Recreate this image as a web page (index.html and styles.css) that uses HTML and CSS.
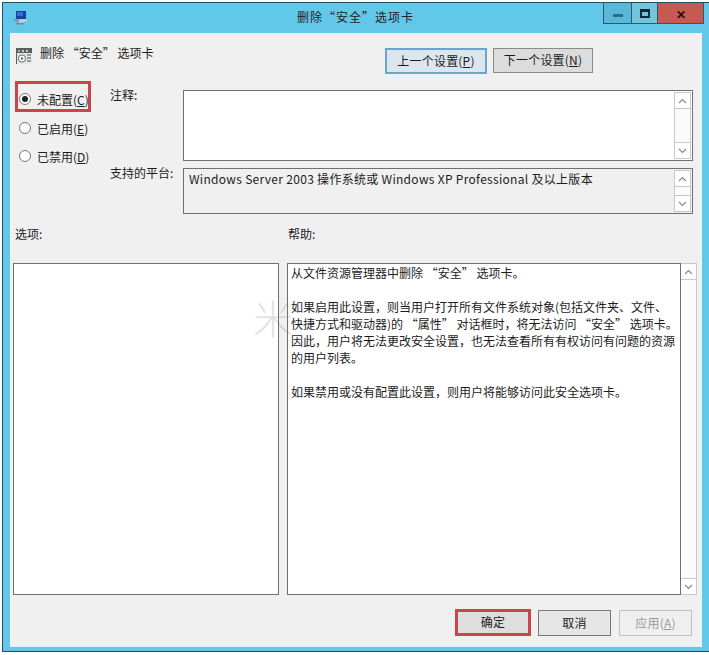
FILE: index.html
```html
<!DOCTYPE html>
<html lang="zh-CN">
<head>
  <meta charset="utf-8">
  <title>删除“安全”选项卡</title>
  <link rel="stylesheet" href="styles.css">
</head>
<body>
  <svg class="defs" width="0" height="0">
    <symbol id="chev-up" viewBox="0 0 9 6"><polyline points="1,5 4.5,1.5 8,5" fill="none" stroke="#8a8a8a" stroke-width="1.2"/></symbol>
    <symbol id="chev-down" viewBox="0 0 9 6"><polyline points="1,1 4.5,4.5 8,1" fill="none" stroke="#8a8a8a" stroke-width="1.2"/></symbol>
  </svg>

  <div class="window">
    <!-- Title bar -->
    <div class="titlebar">
      <svg class="app-icon" width="15" height="14" viewBox="0 0 15 14">
        <rect x="3" y="0" width="10" height="8" fill="#1c3f9e"/>
        <rect x="4" y="1" width="6" height="4" fill="#2f6fe0"/>
        <path d="M1 7 L6 9 L6 12 L1 10 Z" fill="#8a97a8"/>
        <path d="M6 9 L13 8 L14 10 L6 12 Z" fill="#c9d2dc"/>
        <rect x="3" y="12" width="8" height="1.5" fill="#7d8894"/>
      </svg>
      <div class="title">删除“安全”选项卡</div>
      <div class="caption-btns">
        <div class="cap cap-min"><span class="min-glyph"></span></div>
        <div class="cap cap-max"><span class="max-glyph"></span></div>
        <div class="cap cap-close">✕</div>
      </div>
    </div>

    <div class="client">
      <!-- Header -->
      <div class="head-row">
        <div class="policy">
          <svg width="16" height="16" viewBox="0 0 16 16">
            <rect width="16" height="16" fill="#e6e6e2"/>
            <rect width="16" height="5" fill="#5a5f5c"/>
            <rect x="2" y="2" width="2" height="2" fill="#8fc98f"/>
            <rect x="6" y="2" width="2" height="2" fill="#c8d0c0"/>
            <rect x="10" y="2" width="2" height="2" fill="#c8d0c0"/>
            <circle cx="6" cy="10.5" r="3.6" fill="#fff" stroke="#5d6b72"/>
            <circle cx="6" cy="10.5" r="1.2" fill="#5d6b72"/>
            <path d="M11 7h4M11 10h4M11 13h4" stroke="#4d5a50"/>
            <rect y="5" width="1" height="11" fill="#5a5f5c"/>
          </svg>
          <span>删除 “安全” 选项卡</span>
        </div>
        <button class="btn btn-prev">上一个设置(<u>P</u>)</button>
        <button class="btn btn-next">下一个设置(<u>N</u>)</button>
      </div>

      <!-- State and fields -->
      <div class="settings">
        <div class="state">
          <label class="radio radio-marked"><span class="dot dot-on"></span><span>未配置(<u>C</u>)</span></label>
          <label class="radio"><span class="dot"></span><span>已启用(<u>E</u>)</span></label>
          <label class="radio"><span class="dot"></span><span>已禁用(<u>D</u>)</span></label>
        </div>
        <div class="fields">
          <div class="field">
            <div class="field-label">注释:</div>
            <div class="box box-note">
              <div class="scroll">
                <div class="arrow"><svg width="9" height="6"><use href="#chev-up"/></svg></div>
                <div class="track"></div>
                <div class="arrow"><svg width="9" height="6"><use href="#chev-down"/></svg></div>
              </div>
            </div>
          </div>
          <div class="field">
            <div class="field-label">支持的平台:</div>
            <div class="box box-platform">
              <div class="platform-text">Windows Server 2003 操作系统或 Windows XP Professional 及以上版本</div>
              <div class="scroll">
                <div class="arrow"><svg width="9" height="6"><use href="#chev-up"/></svg></div>
                <div class="track"></div>
                <div class="arrow"><svg width="9" height="6"><use href="#chev-down"/></svg></div>
              </div>
            </div>
          </div>
        </div>
      </div>

      <!-- Options and help -->
      <div class="section-labels">
        <div class="label-options">选项:</div>
        <div>帮助:</div>
      </div>
      <div class="panes">
        <div class="pane-options"></div>
        <div class="pane-help">
          从文件资源管理器中删除 “安全” 选项卡。<br>
          <br>
          如果启用此设置，则当用户打开所有文件系统对象(包括文件夹、文件、<br>
          快捷方式和驱动器)的 “属性” 对话框时，将无法访问 “安全” 选项卡。<br>
          因此，用户将无法更改安全设置，也无法查看所有有权访问有问题的资源<br>
          的用户列表。<br>
          <br>
          如果禁用或没有配置此设置，则用户将能够访问此安全选项卡。
        </div>
        <div class="scroll scroll-help">
          <div class="arrow"><svg width="9" height="6"><use href="#chev-up"/></svg></div>
          <div class="track"></div>
          <div class="arrow"><svg width="9" height="6"><use href="#chev-down"/></svg></div>
        </div>
      </div>

      <!-- Footer buttons -->
      <div class="footer">
        <button class="btn btn-ok">确定</button>
        <button class="btn btn-cancel">取消</button>
        <button class="btn btn-apply">应用(<u>A</u>)</button>
      </div>

      <div class="watermark">米</div>
    </div>
  </div>
</body>
</html>
```

FILE: styles.css
```css
* {
  margin: 0;
  padding: 0;
  box-sizing: border-box;
}

html, body {
  width: 709px;
  height: 655px;
  overflow: hidden;
  background: #fff;
}

body {
  font-family: "Noto Sans CJK SC", "Noto Sans", sans-serif;
  font-size: 12px;
  color: #1c1c1c;
}

.defs {
  position: absolute;
}

.window {
  width: 720px;
  height: 650px;
  margin: 2px 0 0 2px;
  background: #62c8ea;
  border: 1px solid #24505f;
}

/* Title bar */
.titlebar {
  display: flex;
  height: 30px;
  padding-right: 17px;
}

.app-icon {
  margin: 8px 0 0 10px;
  flex: none;
}

.title {
  flex: 1;
  padding-left: 80px;
  line-height: 28px;
  letter-spacing: 1px;
  text-align: center;
  color: #222;
}

.caption-btns {
  display: flex;
  height: 21px;
}

.cap {
  display: flex;
  align-items: center;
  justify-content: center;
  border: 1px solid #2a5a70;
  border-top: none;
}

.cap-min {
  width: 29px;
  background: #58b8d8;
}

.cap-max {
  width: 26px;
  border-left: none;
  background: #74c4dc;
}

.cap-close {
  width: 46px;
  border-left: none;
  background: #c75a50;
  color: #1c1010;
  font-size: 12px;
  font-weight: 700;
}

.min-glyph {
  width: 10px;
  height: 3px;
  margin-top: 4px;
  background: #2c6c8c;
}

.max-glyph {
  width: 10px;
  height: 9px;
  border: 2px solid #0e2a3c;
  border-top-width: 3px;
}

/* Client area */
.client {
  position: relative;
  width: 692px;
  height: 614px;
  margin-left: 7px;
  padding: 15px 9px 0 3px;
  background: #f0f0f0;
  border-bottom: 2px solid #e6f2f7;
  box-shadow: inset 1px 0 0 #f4fafc;
}

.head-row {
  display: flex;
  align-items: flex-start;
}

.policy {
  display: flex;
  align-items: flex-start;
  gap: 8px;
  width: 372px;
  padding-left: 3px;
  line-height: 10px;
}

.btn {
  padding-bottom: 2px;
  font: inherit;
  letter-spacing: 0.2px;
  color: inherit;
  background: #e1e1e1;
  border: 1px solid #8a8a8a;
  text-align: center;
}

.btn-prev {
  width: 102px;
  height: 26px;
  margin-right: 6px;
  background: #dde6ee;
  border: 2px solid #6aa6cc;
}

.btn-next {
  width: 100px;
  height: 25px;
  background: #dcdcdc;
}

/* Radios and fields */
.settings {
  display: flex;
  margin-top: 7px;
}

.state {
  width: 97px;
  padding-left: 2px;
}

.radio {
  display: flex;
  align-items: center;
  gap: 6px;
  height: 28px;
  padding-left: 4px;
}

.radio-marked {
  width: 76px;
  height: 31px;
  margin-bottom: 2px;
  padding: 5px 0 0 1px;
  border: 3px solid #cc444b;
  white-space: nowrap;
}

.dot {
  position: relative;
  width: 12px;
  height: 12px;
  background: #fff;
  border: 1px solid #777;
  border-radius: 50%;
  flex: none;
}

.dot-on::after {
  content: "";
  position: absolute;
  top: 2px;
  left: 2px;
  width: 6px;
  height: 6px;
  background: #222;
  border-radius: 50%;
}

.fields {
  display: flex;
  flex-direction: column;
  gap: 7px;
  padding-top: 9px;
}

.field {
  display: flex;
  align-items: flex-start;
}

.field-label {
  width: 73px;
  line-height: 10px;
}

.box {
  display: flex;
  justify-content: flex-end;
  width: 510px;
  padding: 1px;
  background: #fff;
  border: 1px solid #707070;
}

.box-note {
  height: 71px;
}

.box-platform {
  height: 46px;
  background: #f0f0f0;
}

.platform-text {
  flex: 1;
  padding: 1px 0 0 4px;
  line-height: 16px;
  letter-spacing: 0.3px;
  white-space: nowrap;
}

/* Scrollbars */
.scroll {
  display: flex;
  flex-direction: column;
  width: 17px;
  background: #fff;
  border: 1px solid #c8c8c8;
  flex: none;
}

.arrow {
  display: flex;
  align-items: center;
  justify-content: center;
  height: 16px;
  flex: none;
}

.arrow:first-child {
  border-bottom: 1px solid #c8c8c8;
}

.arrow:last-child {
  border-top: 1px solid #c8c8c8;
}

.track {
  flex: 1;
  background: #fbfbfb;
}

/* Options and help */
.section-labels {
  display: flex;
  margin-top: 11px;
  line-height: 17px;
}

.label-options {
  width: 275px;
  padding-left: 2px;
}

.panes {
  display: flex;
  height: 332px;
  margin-top: 21px;
}

.pane-options {
  width: 266px;
  margin-right: 8px;
  background: #fff;
  border: 1px solid #707070;
  flex: none;
}

.pane-help {
  width: 394px;
  padding: 0 0 0 3px;
  background: #fff;
  border: 1px solid #707070;
  line-height: 17px;
  white-space: nowrap;
  flex: none;
}

.scroll-help {
  width: 16px;
  border-left: none;
}

/* Footer buttons */
.footer {
  display: flex;
  align-items: flex-start;
  justify-content: flex-end;
  margin: 14px 1px 0 0;
}

.btn-ok {
  width: 76px;
  height: 27px;
  margin-right: 7px;
  background: #dedede;
  border: 3px solid #cc444b;
}

.btn-cancel {
  width: 73px;
  height: 26px;
  margin: 1px 8px 0 0;
  background: #e6e6e6;
  border-color: #777;
}

.btn-apply {
  width: 73px;
  height: 26px;
  margin-top: 1px;
  background: #efefef;
  border-color: #c0c0c0;
  color: #9a9a9a;
}

/* Faint watermark lying over the panes */
.watermark {
  position: absolute;
  top: 256px;
  left: 243px;
  font-size: 40px;
  font-weight: 300;
  line-height: 56px;
  color: rgba(120, 120, 120, 0.22);
}
```
